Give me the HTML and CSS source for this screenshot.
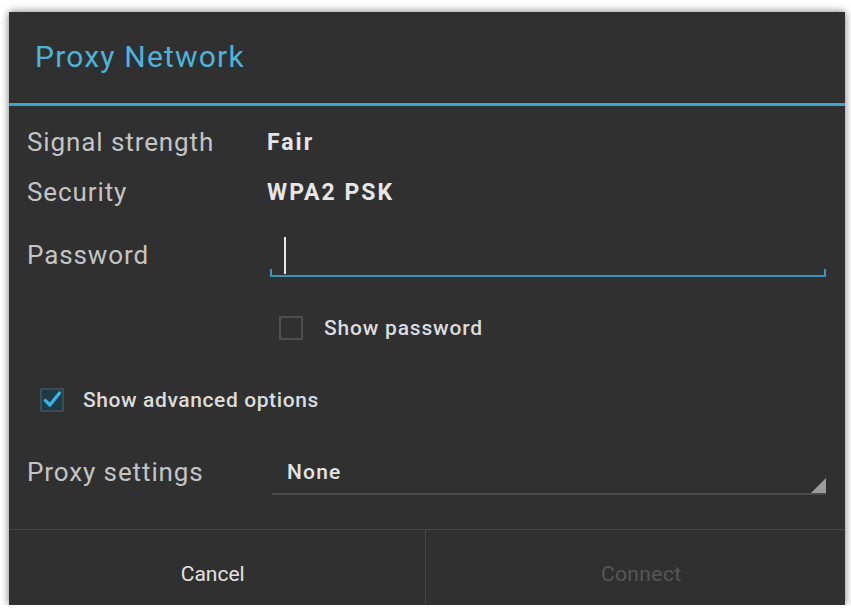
FILE: index.html
```html
<!DOCTYPE html>
<html lang="en">
<head>
  <meta charset="UTF-8">
  <title>Proxy Network</title>
  <meta name="viewport" content="width=device-width, initial-scale=1">
  <link rel="stylesheet" href="styles.css">
</head>
<body>
  <div class="dialog">
    <div class="title">Proxy Network</div>
    <div class="rule"></div>

    <div class="content">
      <div class="row info">
        <span class="label">Signal strength</span>
        <span class="value">Fair</span>
      </div>
      <div class="row info">
        <span class="label">Security</span>
        <span class="value">WPA2 PSK</span>
      </div>
      <div class="row pw">
        <span class="label">Password</span>
        <div class="field"><span class="cursor"></span></div>
      </div>

      <div class="check-row show-pw">
        <span class="box"></span>
        <span class="check-text">Show password</span>
      </div>

      <div class="check-row advanced">
        <span class="box checked">
          <svg viewBox="0 0 24 24" width="22" height="22">
            <path d="M4 12.5 L9.5 18 L21 3.5" fill="none" stroke="#33b5e5" stroke-width="4" stroke-linecap="round" stroke-linejoin="round"/>
          </svg>
        </span>
        <span class="check-text">Show advanced options</span>
      </div>

      <div class="row proxy">
        <span class="label">Proxy settings</span>
        <div class="spinner">None</div>
      </div>
    </div>

    <div class="buttons">
      <button type="button">Cancel</button>
      <button type="button" class="disabled">Connect</button>
    </div>
  </div>
</body>
</html>
```

FILE: styles.css
```css
body { margin: 0; background: #fff; font-family: Roboto, "Noto Sans", sans-serif; }

.dialog {
  margin: 12px 6px 0 9px;
  height: 593px;
  background: #303030;
  display: flex;
  flex-direction: column;
  box-shadow: 0 0 8px rgba(0,0,0,0.55);
}
.title {
  height: 89px;
  padding: 0 0 2px 26px;
  display: flex;
  align-items: center;
  color: #4cb4da;
  font-size: 30px;
  letter-spacing: 1.2px;
}
.rule { height: 3px; background: #3aa6cd; }

.content { flex: 1; padding: 11px 19px 0 18px; }
.row {
  display: grid;
  grid-template-columns: 243px 1fr;
  align-items: center;
}
.row.info { height: 50px; }
.row.pw { height: 60px; margin-top: 8px; }
.row.proxy { height: 48px; margin-top: 30px; }

.label { color: #c4c4c4; font-size: 26px; letter-spacing: 0.9px; }
.value { color: #e6e6e6; font-size: 23px; font-weight: bold; letter-spacing: 2px; margin-left: -3px; }

.field {
  position: relative;
  height: 42px;
  border-bottom: 2px solid #3596ba;
  display: flex;
  align-items: center;
}
.field::before, .field::after {
  content: "";
  position: absolute;
  bottom: 0;
  width: 2px;
  height: 6px;
  background: #3596ba;
}
.field::before { left: 0; }
.field::after { right: 0; }
.cursor { width: 2px; height: 37px; background: #e8e8e8; margin-left: 14px; margin-top: 2px; }

.check-row {
  height: 36px;
  display: flex;
  align-items: center;
  gap: 21px;
}
.check-row.show-pw { margin-top: 25px; padding-left: 252px; }
.check-row.advanced { margin-top: 36px; padding-left: 13px; gap: 19px; }
.check-text { color: #dcdcdc; font-size: 21px; font-weight: 500; letter-spacing: 0.8px; }
.advanced .check-text { letter-spacing: 0.6px; }
.box {
  width: 20px;
  height: 20px;
  border: 2px solid #4f4f4f;
  display: flex;
  align-items: center;
  justify-content: center;
}
.box.checked { background: #1f3a46; border-color: #3a4e56; }

.spinner {
  position: relative;
  margin-left: 2px;
  height: 42px;
  padding-left: 15px;
  display: flex;
  align-items: center;
  color: #e4e4e4;
  font-size: 21px;
  font-weight: 500;
  letter-spacing: 1.2px;
  border-bottom: 2px solid #4c4c4c;
  margin-top: 2px;
}
.spinner::after {
  content: "";
  position: absolute;
  right: 0;
  bottom: 0;
  width: 15px;
  height: 15px;
  background: #9c9c9c;
  clip-path: polygon(100% 0, 100% 100%, 0 100%);
}

.buttons {
  height: 75px;
  border-top: 1px solid #464646;
  display: flex;
}
.buttons button {
  flex: 1;
  background: none;
  border: none;
  color: #e2e2e2;
  font-family: Roboto, sans-serif;
  font-size: 21px;
  padding: 12px 8px 0 0;
}
.buttons button + button { border-left: 1px solid #464646; padding: 12px 0 0 12px; }
.buttons button.disabled { color: #565656; letter-spacing: 0.4px; }
```
